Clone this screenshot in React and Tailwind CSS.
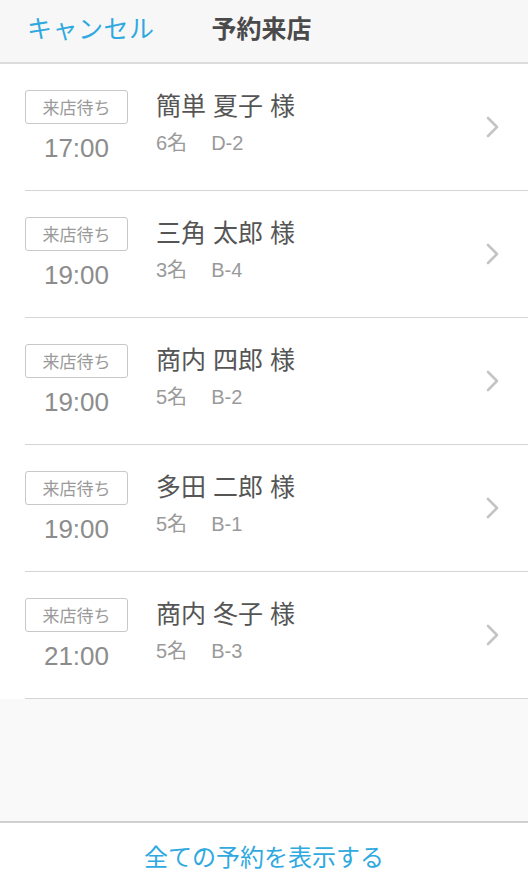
import React from "react";

const reservations = [
  { time: "17:00", name: "簡単 夏子 様", people: "6名", table: "D-2" },
  { time: "19:00", name: "三角 太郎 様", people: "3名", table: "B-4" },
  { time: "19:00", name: "商内 四郎 様", people: "5名", table: "B-2" },
  { time: "19:00", name: "多田 二郎 様", people: "5名", table: "B-1" },
  { time: "21:00", name: "商内 冬子 様", people: "5名", table: "B-3" },
];

const Chevron = () => (
  <svg width="16" height="24" viewBox="0 0 16 24" fill="none">
    <polyline
      points="3,3 12,12 3,21"
      stroke="#c4c4c4"
      strokeWidth="2.6"
      strokeLinecap="round"
      strokeLinejoin="round"
    />
  </svg>
);

const App = () => {
  return (
    <div className="w-[528px] h-[891px] flex flex-col bg-[#f9f9f9] font-['Liberation_Sans','Noto_Sans_CJK_JP',sans-serif]">
      {/* Header */}
      <div className="h-[64px] bg-[#f7f7f7] border-b-2 border-[#dcdcdc] flex items-center pl-[27px] pb-[3px]">
        <span className="text-[25px] text-[#2fa9e0] tracking-[0.5px]">キャンセル</span>
        <span className="ml-[57px] text-[25px] font-bold text-[#4a4a4a]">予約来店</span>
      </div>

      {/* List */}
      <div className="bg-white">
        {reservations.map((r, i) => (
          <div key={i} className="pl-[25px]">
            <div className="h-[127px] border-b border-[#d4d4d4] flex items-center pr-[27px]">
              <div className="flex flex-1 items-start self-start pt-[26px]">
                <div className="w-[103px] flex flex-col items-center">
                  <div className="w-[103px] h-[34px] border border-[#c8c8c8] rounded-[3px] flex items-center justify-center pt-[4px] text-[17px] text-[#9a9a9a]">
                    来店待ち
                  </div>
                  <div className="mt-[9px] text-[26px] leading-[30px] text-[#8c8c8c]">{r.time}</div>
                </div>
                <div className="ml-[28px] flex flex-col">
                  <div className="mt-px text-[25px] leading-[30px] text-[#555]">{r.name}</div>
                  <div className="mt-[10px] text-[20px] leading-[24px] text-[#9a9a9a] flex">
                    <span>{r.people}</span>
                    <span className="ml-[24px]">{r.table}</span>
                  </div>
                </div>
              </div>
              <Chevron />
            </div>
          </div>
        ))}
      </div>

      {/* Spacer */}
      <div className="flex-1" />

      {/* Footer */}
      <div className="h-[70px] bg-white border-t-2 border-[#d0d0d0] flex items-center justify-center pt-[2px]">
        <span className="text-[24px] text-[#2fa9e0]">全ての予約を表示する</span>
      </div>
    </div>
  );
};

export default App;
